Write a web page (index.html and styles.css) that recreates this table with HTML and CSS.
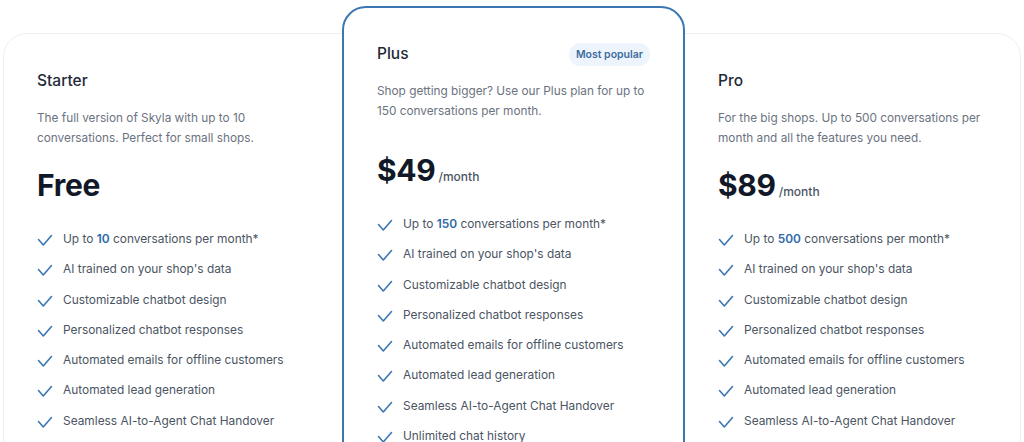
FILE: index.html
```html
<!DOCTYPE html>
<html lang="en">
<head>
<meta charset="utf-8">
<title>Pricing</title>
<link rel="stylesheet" href="styles.css">
</head>
<body>
<section class="pricing">
  <div class="plan">
    <div class="plan-head"><h3 class="plan-name">Starter</h3></div>
    <p class="plan-desc">The full version of Skyla with up to 10 conversations. Perfect for small shops.</p>
    <div class="price"><span class="amount">Free</span></div>
    <ul class="features">
      <li><svg class="check" viewBox="0 0 16 13"><polyline points="1.5,5.5 6.3,11 14.5,1.5"/></svg><span>Up to <b>10</b> conversations per month*</span></li>
      <li><svg class="check" viewBox="0 0 16 13"><polyline points="1.5,5.5 6.3,11 14.5,1.5"/></svg><span>AI trained on your shop's data</span></li>
      <li><svg class="check" viewBox="0 0 16 13"><polyline points="1.5,5.5 6.3,11 14.5,1.5"/></svg><span>Customizable chatbot design</span></li>
      <li><svg class="check" viewBox="0 0 16 13"><polyline points="1.5,5.5 6.3,11 14.5,1.5"/></svg><span>Personalized chatbot responses</span></li>
      <li><svg class="check" viewBox="0 0 16 13"><polyline points="1.5,5.5 6.3,11 14.5,1.5"/></svg><span>Automated emails for offline customers</span></li>
      <li><svg class="check" viewBox="0 0 16 13"><polyline points="1.5,5.5 6.3,11 14.5,1.5"/></svg><span>Automated lead generation</span></li>
      <li><svg class="check" viewBox="0 0 16 13"><polyline points="1.5,5.5 6.3,11 14.5,1.5"/></svg><span>Seamless AI-to-Agent Chat Handover</span></li>
    </ul>
  </div>
  <div class="plan plan-featured">
    <div class="plan-head"><h3 class="plan-name">Plus</h3><span class="badge">Most popular</span></div>
    <p class="plan-desc">Shop getting bigger? Use our Plus plan for up to 150 conversations per month.</p>
    <div class="price"><span class="amount">$49</span><span class="period">/month</span></div>
    <ul class="features">
      <li><svg class="check" viewBox="0 0 16 13"><polyline points="1.5,5.5 6.3,11 14.5,1.5"/></svg><span>Up to <b>150</b> conversations per month*</span></li>
      <li><svg class="check" viewBox="0 0 16 13"><polyline points="1.5,5.5 6.3,11 14.5,1.5"/></svg><span>AI trained on your shop's data</span></li>
      <li><svg class="check" viewBox="0 0 16 13"><polyline points="1.5,5.5 6.3,11 14.5,1.5"/></svg><span>Customizable chatbot design</span></li>
      <li><svg class="check" viewBox="0 0 16 13"><polyline points="1.5,5.5 6.3,11 14.5,1.5"/></svg><span>Personalized chatbot responses</span></li>
      <li><svg class="check" viewBox="0 0 16 13"><polyline points="1.5,5.5 6.3,11 14.5,1.5"/></svg><span>Automated emails for offline customers</span></li>
      <li><svg class="check" viewBox="0 0 16 13"><polyline points="1.5,5.5 6.3,11 14.5,1.5"/></svg><span>Automated lead generation</span></li>
      <li><svg class="check" viewBox="0 0 16 13"><polyline points="1.5,5.5 6.3,11 14.5,1.5"/></svg><span>Seamless AI-to-Agent Chat Handover</span></li>
      <li><svg class="check" viewBox="0 0 16 13"><polyline points="1.5,5.5 6.3,11 14.5,1.5"/></svg><span>Unlimited chat history</span></li>
    </ul>
  </div>
  <div class="plan">
    <div class="plan-head"><h3 class="plan-name">Pro</h3></div>
    <p class="plan-desc">For the big shops. Up to 500 conversations per month and all the features you need.</p>
    <div class="price"><span class="amount">$89</span><span class="period">/month</span></div>
    <ul class="features">
      <li><svg class="check" viewBox="0 0 16 13"><polyline points="1.5,5.5 6.3,11 14.5,1.5"/></svg><span>Up to <b>500</b> conversations per month*</span></li>
      <li><svg class="check" viewBox="0 0 16 13"><polyline points="1.5,5.5 6.3,11 14.5,1.5"/></svg><span>AI trained on your shop's data</span></li>
      <li><svg class="check" viewBox="0 0 16 13"><polyline points="1.5,5.5 6.3,11 14.5,1.5"/></svg><span>Customizable chatbot design</span></li>
      <li><svg class="check" viewBox="0 0 16 13"><polyline points="1.5,5.5 6.3,11 14.5,1.5"/></svg><span>Personalized chatbot responses</span></li>
      <li><svg class="check" viewBox="0 0 16 13"><polyline points="1.5,5.5 6.3,11 14.5,1.5"/></svg><span>Automated emails for offline customers</span></li>
      <li><svg class="check" viewBox="0 0 16 13"><polyline points="1.5,5.5 6.3,11 14.5,1.5"/></svg><span>Automated lead generation</span></li>
      <li><svg class="check" viewBox="0 0 16 13"><polyline points="1.5,5.5 6.3,11 14.5,1.5"/></svg><span>Seamless AI-to-Agent Chat Handover</span></li>
    </ul>
  </div>
</section>
</body>
</html>
```

FILE: styles.css
```css
* { box-sizing: border-box; }

html, body {
  margin: 0;
  padding: 0;
  background: #ffffff;
  overflow: hidden;
}

body {
  font-family: Inter, "Noto Sans", "Liberation Sans", sans-serif;
  color: #1f2937;
}

.pricing {
  display: grid;
  grid-template-columns: 338px 343px 1fr;
  align-items: start;
  margin: 33px 3px 0 3px;
  border: 1px solid #eceef1;
  border-radius: 24px;
  min-height: 480px;
}

.plan {
  padding: 34px 33px 40px 33px;
}

.plan-featured {
  margin-top: -28px;
  padding-top: 33px;
  border: 2px solid #3b77b3;
  border-radius: 24px;
  background: #ffffff;
  min-height: 520px;
}

.plan-head {
  display: flex;
  align-items: center;
  justify-content: space-between;
  height: 24px;
  margin-top: 1px;
}

.plan-name {
  margin: 0;
  font-size: 15.5px;
  line-height: 24px;
  font-weight: 500;
  color: #1f2937;
}

.badge {
  display: inline-flex;
  align-items: center;
  height: 23px;
  padding: 0 7px;
  border-radius: 12px;
  background: #eef4fb;
  color: #3a6d9f;
  font-size: 10.5px;
  font-weight: 600;
}

.plan-desc {
  margin: 15px 0 0 0;
  font-size: 11.8px;
  line-height: 20px;
  color: #6b7280;
}

.price {
  display: flex;
  align-items: baseline;
  gap: 3px;
  margin-top: 19px;
  height: 36px;
}

.plan-featured .price {
  margin-top: 31px;
}

.amount {
  font-size: 30px;
  line-height: 36px;
  font-weight: 700;
  color: #111827;
  letter-spacing: -0.3px;
}

.period {
  font-size: 12px;
  font-weight: 500;
  color: #4b5563;
}

.features {
  list-style: none;
  margin: 26px 0 0 0;
  padding: 0;
  display: flex;
  flex-direction: column;
  gap: 10px;
}

.features li {
  display: flex;
  align-items: center;
  gap: 10px;
  font-size: 11.9px;
  line-height: 20.25px;
  color: #4b5563;
}

.features b {
  font-weight: 600;
  color: #2f6aa8;
}

.check {
  flex: none;
  width: 16px;
  height: 13px;
  margin-top: 3px;
  fill: none;
  stroke: #3b77b3;
  stroke-width: 1.6;
  stroke-linecap: round;
  stroke-linejoin: round;
}
```
